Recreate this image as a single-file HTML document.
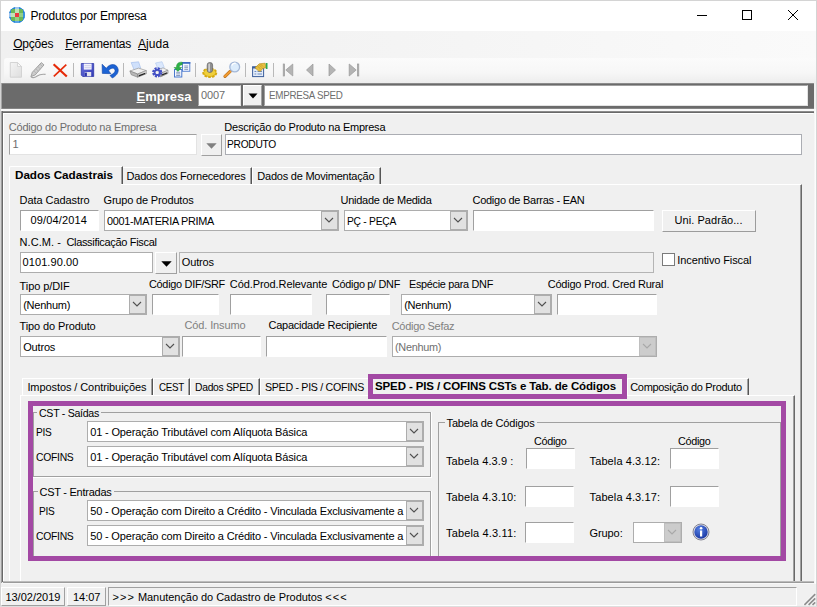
<!DOCTYPE html>
<html lang="pt-BR"><head><meta charset="utf-8"><title>Produtos por Empresa</title>
<style>
html,body{margin:0;padding:0;}
body{width:817px;height:607px;overflow:hidden;background:#f0f0f0;position:relative;font-family:"Liberation Sans", sans-serif;font-size:11px;color:#000;}
div,svg,span.t{position:absolute;box-sizing:border-box;}
span.t{white-space:pre;line-height:1;}
u{text-decoration:underline;text-underline-offset:1px;}
</style></head>
<body>
<div style="left:0px;top:0px;width:817px;height:31px;background:#fff;"></div>
<div style="left:0px;top:31px;width:817px;height:27px;background:linear-gradient(90deg,#f0f0f0 0%,#f3f3f3 40%,#fafafa 100%);"></div>
<div style="left:4px;top:58px;width:813px;height:26px;background:linear-gradient(180deg,#fbfbfb 0%,#f7f7f7 55%,#ececec 100%);border-top-left-radius:3px;"></div>
<div style="left:0px;top:0px;width:817px;height:1px;background:#d4d4d4;"></div>
<div style="left:0px;top:0px;width:1px;height:607px;background:#d4d4d4;"></div>
<div style="left:816px;top:0px;width:1px;height:607px;background:#d4d4d4;"></div>
<div style="left:0px;top:606px;width:817px;height:1px;background:#dedede;"></div>
<svg style="left:9px;top:7px" width="16" height="16" viewBox="0 0 16 16">
<defs><clipPath id="gc"><circle cx="8" cy="8" r="8"/></clipPath></defs>
<g clip-path="url(#gc)">
<rect x="0" y="0" width="16" height="16" fill="#2585d8"/>
<rect x="2" y="2" width="12" height="12" fill="#6cb857"/>
<rect x="6" y="0" width="4" height="2" fill="#a4c8f0"/><rect x="0" y="6" width="2" height="4" fill="#a4c8f0"/>
<rect x="6" y="14" width="4" height="2" fill="#5aa4e4"/><rect x="14" y="6" width="2" height="4" fill="#3a92dc"/>
<rect x="6" y="2" width="4" height="4" fill="#bfe3b6"/><rect x="2" y="6" width="4" height="4" fill="#bfe3b6"/>
<rect x="10" y="6" width="4" height="4" fill="#94cf84"/><rect x="6" y="10" width="4" height="4" fill="#94cf84"/>
<rect x="6" y="6" width="4" height="4" fill="#e83a40"/>
<path d="M0 0 h6 v1 h-2 v1 h-1 v1 h-1 v1 h-1 v2 h-1 z M16 0 h-6 v1 h2 v1 h1 v1 h1 v1 h1 v2 h1 z M0 16 h6 v-1 h-2 v-1 h-1 v-1 h-1 v-1 h-1 v-2 h-1 z M16 16 h-6 v-1 h2 v-1 h1 v-1 h1 v-1 h1 v-2 h1 z" fill="#2585d8"/>
</g>
</svg>
<span class="t" style="left:30.5px;top:10.0px;letter-spacing:-0.203px;font-size:12px;">Produtos por Empresa</span>
<svg style="left:690px;top:5px" width="120" height="22" viewBox="0 0 120 22"><g fill="none" stroke="#000" stroke-width="1"><path d="M7 10.5 H17"/><rect x="52.5" y="5.5" width="9" height="9"/><path d="M98 5 L108 15 M108 5 L98 15"/></g></svg>
<span class="t" style="left:13.2px;top:38.0px;letter-spacing:-0.229px;font-size:12px;"><u>O</u>pções</span>
<span class="t" style="left:65.2px;top:38.0px;letter-spacing:-0.186px;font-size:12px;"><u>F</u>erramentas</span>
<span class="t" style="left:138px;top:38.0px;letter-spacing:0.059px;font-size:12px;"><u>A</u>juda</span>
<svg style="left:0px;top:57px" width="380" height="27" viewBox="0 0 380 27">
<defs>
<linearGradient id="gsv" x1="0" y1="0" x2="1" y2="1"><stop offset="0" stop-color="#6f76e0"/><stop offset="1" stop-color="#2f38b4"/></linearGradient>
<linearGradient id="gpr" x1="0" y1="0" x2="0" y2="1"><stop offset="0" stop-color="#f4f4f4"/><stop offset="1" stop-color="#9c9c9c"/></linearGradient>
<linearGradient id="gdoc" x1="0" y1="0" x2="1" y2="1"><stop offset="0" stop-color="#f4f4f4"/><stop offset="1" stop-color="#dedede"/></linearGradient>
</defs>
<!-- new doc (disabled) -->
<path d="M10.300 5.500 h7.200 l4 4 v10.700 h-11.200 z" fill="url(#gdoc)" stroke="#d0d0d0" stroke-width=".9"/>
<path d="M17.500 5.500 v4 h4 z" fill="#f8f8f8" stroke="#d0d0d0" stroke-width=".8"/>
<!-- pencil (disabled) -->
<path d="M41.300 5.600 l2.700 2.300 l-8.800 10 l-4.200 1.600 l1.300 -4.200 z" fill="#cdcdcd" stroke="#9c9c9c" stroke-width=".9"/>
<path d="M40 7.200 l2.600 2.300 M34 14.200 l2.400 2.200 M36 12 l2.400 2.200 M38 9.700 l2.400 2.200" stroke="#a8a8a8" stroke-width=".6"/>
<path d="M30.800 19.300 c1.500 2 4.200 1.300 6.400 -0.300 c2.200 -1.600 5 -2 8.400 -1.600" fill="none" stroke="#a6a6a6" stroke-width="1.100"/>
<!-- red X -->
<path d="M53.600 7.300 L66.800 19.500" stroke="#e62a08" stroke-width="2.200" fill="none"/>
<path d="M66.300 7.600 L53.800 19.400" stroke="#e62a08" stroke-width="1.600" fill="none"/>
<!-- sep -->
<rect x="73" y="6" width="1" height="14" fill="#b9b9b9"/>
<!-- save -->
<path d="M81.300 6.500 h12.400 v13 h-11 l-1.400 -1.400 z" fill="url(#gsv)" stroke="#3038a8" stroke-width=".8"/>
<rect x="83.800" y="6.600" width="7.800" height="6" fill="#f4f4fc"/>
<path d="M84.500 8.700 h6.400 M84.500 10.700 h6.400" stroke="#c4c4e4" stroke-width=".8"/>
<rect x="84.700" y="15" width="6.500" height="4.300" fill="#e4e4ec"/>
<rect x="84.700" y="15.600" width="2.200" height="3.700" fill="#2c34a8"/>
<!-- undo -->
<path d="M102.100 7.200 L102.300 16.400 L110.900 16.700 L108.600 13.800 C110.300 10.800 114.200 10 115 13.100 C115.500 15 113.200 17.200 110 18.500 L112.300 21 C116 19.200 118.600 16 118.200 12.600 C117.500 7 110.500 5.300 106.300 11.300 Z" fill="#1c63d4" stroke="#1247a8" stroke-width=".6"/>
<!-- sep -->
<rect x="123" y="6" width="1" height="14" fill="#b9b9b9"/>
<!-- printer -->
<path d="M131.200 5.600 l7.400 -0.800 l2.100 6.400 l-6.500 1.900 z" fill="#cfe0fb" stroke="#9db9ea" stroke-width=".6"/>
<path d="M129.900 14 l8.700 -2.900 l7.700 2.500 l-8.700 3.400 z" fill="#f0f0f0" stroke="#8a8a8a" stroke-width=".6"/>
<path d="M129.900 14 l7.700 3 v3.200 l-6.400 -2.500 z" fill="#b8b8b8" stroke="#7c7c7c" stroke-width=".6"/>
<path d="M137.600 17 l8.700 -3.400 v3.200 l-8.700 3.400 z" fill="url(#gpr)" stroke="#7c7c7c" stroke-width=".6"/>
<path d="M138.800 18.200 l6.400 -2.500 v1.300 l-6.400 2.600 z" fill="#1c1c1c"/>
<!-- printer w/ gear -->
<path d="M155.500 6 l6.500 -1.300 l2.300 5.800 l-6 2 z" fill="#dbe8fc" stroke="#afc6ee" stroke-width=".6"/>
<path d="M155.500 13.500 l7.500 -2.600 l5 2.300 l-7.500 3.200 z" fill="#f2f2f2" stroke="#909090" stroke-width=".6"/>
<path d="M160.500 16.400 l7.500 -3.200 v3.200 l-7.500 3.500 z" fill="url(#gpr)" stroke="#808080" stroke-width=".6"/>
<path d="M161.500 17.600 l5.600 -2.300 v1.100 l-5.600 2.400 z" fill="#222"/>
<circle cx="157.200" cy="15.400" r="3.700" fill="none" stroke="#4450c4" stroke-width="2.800" stroke-dasharray="1.940 0.970"/>
<circle cx="157.200" cy="15.400" r="2.600" fill="none" stroke="#4450c4" stroke-width="1.800"/>
<circle cx="157.200" cy="15.400" r="1.200" fill="#f4f4f4"/>
<!-- copy doc w/ green arrow -->
<rect x="182.500" y="5.500" width="7.300" height="8.800" fill="#f4f8ff" stroke="#5f88d4" stroke-width="1"/>
<rect x="182" y="5" width="8.300" height="1.800" fill="#3e6cc4"/>
<path d="M184.300 9 h3.800 M184.300 10.700 h3.800 M184.300 12.400 h3.800" stroke="#6e84ac" stroke-width=".8"/>
<rect x="174.500" y="12.500" width="7.300" height="7.500" fill="#f4f8ff" stroke="#4a78cc" stroke-width="1"/>
<path d="M176.200 15.300 h4 M176.200 16.900 h4 M176.200 18.500 h4" stroke="#6e84ac" stroke-width=".8"/>
<path d="M182.200 5.200 c-4 -0.300 -5.800 1.600 -5.800 5.300 h-2.300 l3.800 3.900 l3.800 -3.900 h-2.400 c0 -1.800 0.800 -2.700 2.900 -2.700 z" fill="#2eb146" stroke="#1c8c32" stroke-width=".5"/>
<!-- sep -->
<rect x="195" y="6" width="1" height="14" fill="#b9b9b9"/>
<!-- gold stamp/gear -->
<ellipse cx="209.800" cy="15.800" rx="6.600" ry="4.300" fill="#e2b818" stroke="#d4a810" stroke-width="1.800" stroke-dasharray="2.600 1.200"/>
<ellipse cx="209.800" cy="15.600" rx="5.600" ry="3.500" fill="#efcf3c"/>
<rect x="207.200" y="5.600" width="5.400" height="9.800" rx="2.400" fill="#909090" stroke="#606060" stroke-width=".7"/>
<rect x="208.400" y="6.600" width="1.500" height="8" fill="#d4d4d4"/>
<!-- magnifier -->
<path d="M225 19.300 l5.200 -4.900" stroke="#b87020" stroke-width="3.200" stroke-linecap="round"/>
<path d="M225 19.300 l5.200 -4.900" stroke="#f09a30" stroke-width="2" stroke-linecap="round"/>
<circle cx="234.700" cy="10" r="4.900" fill="#dcecfc" stroke="#a4b8d8" stroke-width="1.300"/>
<path d="M231.800 8.500 a3.500 3.500 0 0 1 4 -2.200" stroke="#fff" stroke-width="1.300" fill="none"/>
<!-- sep -->
<rect x="245" y="6" width="1" height="14" fill="#b9b9b9"/>
<!-- properties -->
<rect x="252.600" y="9.900" width="11" height="9.700" fill="#e4ecf8" stroke="#3c5f9c" stroke-width="1"/>
<rect x="252.200" y="9.500" width="11.800" height="2" fill="#3c5f9c"/>
<path d="M254.500 14.500 h1.800 M257.500 14.500 h4.500 M254.500 17 h1.800 M257.500 17 h4.500" stroke="#6a8cc4" stroke-width="1"/>
<path d="M255 10.800 l4.300 -4 l5.800 -0.600 l0.900 4.300 l-3.600 1.200 l-1.800 2.600 l-2 -0.300 z" fill="#e8c040" stroke="#b08818" stroke-width=".6"/>
<path d="M257.500 9 l3 3 M259 7.700 l3 3 M260.500 7 l2.500 2.500" stroke="#b08818" stroke-width=".5"/>
<path d="M265.800 6 h1.700 v6 h-1.700 z" fill="#2faa4c"/>
<!-- sep -->
<rect x="273" y="6" width="1" height="14" fill="#b9b9b9"/>
<!-- nav -->
<g fill="#b4b4b4" stroke="#9a9a9a" stroke-width=".7">
<rect x="283.200" y="7" width="1.400" height="12"/><path d="M292.800 7 v12 l-7 -6 z"/>
<path d="M313 7 v12 l-6.500 -6 z"/>
<path d="M329 7 v12 l6.500 -6 z"/>
<path d="M349.200 7 v12 l7 -6 z"/><rect x="357.400" y="7" width="1.400" height="12"/>
</g>
</svg>
<div style="left:1px;top:83px;width:813px;height:26px;background:#a4a4a4;"></div>
<div style="left:2px;top:83px;width:812px;height:1px;background:#8c8c8c;"></div>
<div style="left:2px;top:84px;width:812px;height:24px;background:#6b6b6b;"></div>
<div style="left:2px;top:108px;width:812px;height:1px;background:#858585;"></div>
<div style="left:1px;top:109px;width:815px;height:2px;background:#f9f9f9;"></div>
<span class="t" style="left:136.5px;top:90.0px;letter-spacing:0.011px;font-size:13px;font-weight:bold;color:#fff;"><u>E</u>mpresa</span>
<div style="left:198px;top:85px;width:43px;height:21px;background:#fff;border:1px solid;border-color:#a0a0a0 #e3e3e3 #e3e3e3 #a0a0a0;"></div>
<span class="t" style="left:201px;top:89.5px;letter-spacing:-0.121px;color:#6d6d6d;">0007</span>
<div style="left:243px;top:85px;width:19px;height:21px;background:#f0f0f0;border:1px solid;border-color:#fff #a0a0a0 #a0a0a0 #fff;"></div>
<svg style="left:247.5px;top:92.8px" width="10" height="6" viewBox="0 0 10 6"><path d="M0.500 0.500 L9.500 0.500 L5 5.500 Z" fill="#000"/></svg>
<div style="left:264px;top:85px;width:544px;height:21px;background:#fff;border:1px solid;border-color:#a0a0a0 #e3e3e3 #e3e3e3 #a0a0a0;"></div>
<span class="t" style="left:269.3px;top:89.5px;letter-spacing:-0.3px;color:#6d6d6d;transform:scaleX(0.8897);transform-origin:0 50%;">EMPRESA SPED</span>
<div style="left:1px;top:111px;width:813px;height:1px;background:#8c8c8c;"></div>
<div style="left:2px;top:112px;width:812px;height:1px;background:#696969;"></div>
<div style="left:1px;top:111px;width:1px;height:472px;background:#a0a0a0;"></div>
<div style="left:2px;top:111px;width:1px;height:471px;background:#696969;"></div>
<div style="left:3px;top:113px;width:810px;height:1px;background:#fff;"></div>
<div style="left:3px;top:113px;width:1px;height:468px;background:#fff;"></div>
<div style="left:814px;top:111px;width:2px;height:473px;background:linear-gradient(90deg,#f4f4f4,#fff);"></div>
<span class="t" style="left:8.8px;top:122.0px;letter-spacing:-0.236px;color:#6d6d6d;">Código do Produto na Empresa</span>
<div style="left:9px;top:134px;width:188px;height:21px;background:#fff;border:1px solid;border-color:#a0a0a0 #e3e3e3 #e3e3e3 #a0a0a0;"></div>
<span class="t" style="left:12.5px;top:138.7px;letter-spacing:-0.2px;color:#6d6d6d;">1</span>
<div style="left:201px;top:134px;width:21px;height:22px;background:#f0f0f0;border:1px solid;border-color:#fff #a0a0a0 #a0a0a0 #fff;"></div>
<svg style="left:206.0px;top:142.5px" width="11" height="6" viewBox="0 0 11 6"><path d="M0.3 0.3 L10.7 0.3 L5.5 5.7 Z" fill="#808080"/></svg>
<span class="t" style="left:224.3px;top:122.0px;letter-spacing:-0.231px;">Descrição do Produto na Empresa</span>
<div style="left:225px;top:134px;width:577px;height:21px;background:#fff;border:1px solid #abadb3;"></div>
<span class="t" style="left:227.2px;top:138.7px;letter-spacing:-0.3px;transform:scaleX(0.9297);transform-origin:0 50%;">PRODUTO</span>
<div style="left:9px;top:184px;width:793px;height:397px;background:#f0f0f0;border:1px solid;border-color:#fff #696969 #696969 #fff;border-bottom:0;box-shadow:inset -1px 0 0 #a0a0a0;"></div>
<div style="left:9px;top:166px;width:114px;height:18px;background:#f0f0f0;border:1px solid;border-color:#fff #555 #f0f0f0 #fff;border-bottom:0;box-shadow:inset -1px 0 0 #a0a0a0;border-top-left-radius:2px;"></div>
<div style="left:10px;top:184px;width:111px;height:1px;background:#f0f0f0;"></div>
<span class="t" style="left:15px;top:168.95px;letter-spacing:-0.046px;font-size:11.7px;font-weight:bold;">Dados Cadastrais</span>
<div style="left:123px;top:167px;width:129px;height:17px;border-right:1px solid #555;border-top:1px solid #fff;box-shadow:inset -1px 0 0 #a0a0a0;"></div>
<span class="t" style="left:126.5px;top:171.0px;letter-spacing:-0.205px;">Dados dos Fornecedores</span>
<div style="left:252px;top:167px;width:129px;height:17px;border-left:1px solid #fff;border-right:1px solid #555;border-top:1px solid #fff;box-shadow:inset -1px 0 0 #a0a0a0;"></div>
<span class="t" style="left:257.3px;top:171.0px;letter-spacing:-0.223px;">Dados de Movimentação</span>
<span class="t" style="left:19.6px;top:195.0px;letter-spacing:-0.072px;">Data Cadastro</span>
<div style="left:20px;top:210px;width:79px;height:21px;background:#fff;border:1px solid;border-color:#a0a0a0 #fff #fff #a0a0a0;"></div>
<span class="t" style="left:30.6px;top:214.7px;letter-spacing:0.144px;">09/04/2014</span>
<span class="t" style="left:103.5px;top:195.0px;letter-spacing:-0.174px;">Grupo de Produtos</span>
<div style="left:104px;top:210px;width:235px;height:21px;background:#fff;border:1px solid #adadad;"></div>
<div style="left:321px;top:211px;width:17px;height:19px;background:#e1e1e1;border:1px solid #adadad;"></div>
<svg style="left:323.5px;top:217.3px" width="10" height="6" viewBox="0 0 10 6"><path d="M1 1 L5 5 L9 1" fill="none" stroke="#505050" stroke-width="1.1"/></svg>
<span class="t" style="left:107.2px;top:216.0px;letter-spacing:-0.3px;transform:scaleX(0.9897);transform-origin:0 50%;">0001-MATERIA PRIMA</span>
<span class="t" style="left:340.5px;top:195.0px;letter-spacing:-0.259px;">Unidade de Medida</span>
<div style="left:344px;top:210px;width:124px;height:21px;background:#fff;border:1px solid #adadad;"></div>
<div style="left:450px;top:211px;width:17px;height:19px;background:#e1e1e1;border:1px solid #adadad;"></div>
<svg style="left:452.5px;top:217.3px" width="10" height="6" viewBox="0 0 10 6"><path d="M1 1 L5 5 L9 1" fill="none" stroke="#505050" stroke-width="1.1"/></svg>
<span class="t" style="left:347.2px;top:216.0px;letter-spacing:-0.3px;transform:scaleX(0.9367);transform-origin:0 50%;">PÇ - PEÇA</span>
<span class="t" style="left:472.5px;top:195.0px;letter-spacing:-0.273px;">Codigo de Barras - EAN</span>
<div style="left:473px;top:210px;width:181px;height:21px;background:#fff;border:1px solid;border-color:#a0a0a0 #fff #fff #a0a0a0;"></div>
<div style="left:662px;top:210px;width:94px;height:22px;background:#f0f0f0;border:1px solid;border-color:#fff #9c9c9c #9c9c9c #fff;"></div>
<span class="t" style="left:674.6px;top:215.3px;letter-spacing:0.052px;">Uni. Padrão...</span>
<span class="t" style="left:19.6px;top:236.8px;letter-spacing:0.043px;">N.C.M. -</span>
<span class="t" style="left:66.4px;top:236.8px;letter-spacing:-0.32px;">Classificação Fiscal</span>
<div style="left:20px;top:252px;width:133px;height:21px;background:#fff;border:1px solid #adadad;"></div>
<span class="t" style="left:22.5px;top:256.7px;letter-spacing:0.094px;">0101.90.00</span>
<div style="left:155px;top:252px;width:22px;height:22px;background:#f0f0f0;border:1px solid;border-color:#fff #a0a0a0 #a0a0a0 #fff;"></div>
<svg style="left:160.5px;top:260.5px" width="11" height="6" viewBox="0 0 11 6"><path d="M0.3 0.3 L10.7 0.3 L5.5 5.7 Z" fill="#000"/></svg>
<div style="left:179px;top:252px;width:475px;height:21px;background:#f0f0f0;border:1px solid #b4b4b4;"></div>
<span class="t" style="left:181.8px;top:256.9px;letter-spacing:-0.169px;">Outros</span>
<div style="left:662px;top:253px;width:13px;height:13px;background:#fff;border:1px solid #7a7a7a;"></div>
<span class="t" style="left:677.3px;top:254.7px;letter-spacing:-0.113px;">Incentivo Fiscal</span>
<span class="t" style="left:19.6px;top:281.0px;letter-spacing:-0.095px;">Tipo p/DIF</span>
<div style="left:20px;top:294px;width:127px;height:21px;background:#fff;border:1px solid #adadad;"></div>
<div style="left:129px;top:295px;width:17px;height:19px;background:#e1e1e1;border:1px solid #adadad;"></div>
<svg style="left:131.5px;top:301.3px" width="10" height="6" viewBox="0 0 10 6"><path d="M1 1 L5 5 L9 1" fill="none" stroke="#505050" stroke-width="1.1"/></svg>
<span class="t" style="left:23.2px;top:300.0px;letter-spacing:-0.238px;">(Nenhum)</span>
<span class="t" style="left:148.6px;top:279.0px;letter-spacing:-0.3px;transform:scaleX(0.9935);transform-origin:0 50%;">Código DIF/SRF</span>
<div style="left:152px;top:294px;width:67px;height:21px;background:#fff;border:1px solid;border-color:#a0a0a0 #fff #fff #a0a0a0;"></div>
<span class="t" style="left:229.8px;top:279.0px;letter-spacing:-0.087px;">Cód.Prod.Relevante</span>
<div style="left:230px;top:294px;width:82px;height:21px;background:#fff;border:1px solid;border-color:#a0a0a0 #fff #fff #a0a0a0;"></div>
<span class="t" style="left:331.8px;top:279.0px;letter-spacing:-0.3px;transform:scaleX(0.9875);transform-origin:0 50%;">Código p/ DNF</span>
<div style="left:326px;top:294px;width:64px;height:21px;background:#fff;border:1px solid;border-color:#a0a0a0 #fff #fff #a0a0a0;"></div>
<span class="t" style="left:409.4px;top:279.0px;letter-spacing:-0.3px;transform:scaleX(0.9873);transform-origin:0 50%;">Espécie para DNF</span>
<div style="left:401px;top:294px;width:151px;height:21px;background:#fff;border:1px solid #adadad;"></div>
<div style="left:534px;top:295px;width:17px;height:19px;background:#e1e1e1;border:1px solid #adadad;"></div>
<svg style="left:536.5px;top:301.3px" width="10" height="6" viewBox="0 0 10 6"><path d="M1 1 L5 5 L9 1" fill="none" stroke="#505050" stroke-width="1.1"/></svg>
<span class="t" style="left:404.2px;top:300.0px;letter-spacing:-0.238px;">(Nenhum)</span>
<span class="t" style="left:547.7px;top:279.0px;letter-spacing:-0.215px;">Código Prod. Cred Rural</span>
<div style="left:557px;top:294px;width:100px;height:21px;background:#fff;border:1px solid;border-color:#a0a0a0 #fff #fff #a0a0a0;"></div>
<span class="t" style="left:19.6px;top:320.8px;letter-spacing:-0.125px;">Tipo do Produto</span>
<div style="left:20px;top:336px;width:160px;height:21px;background:#fff;border:1px solid #adadad;"></div>
<div style="left:162px;top:337px;width:17px;height:19px;background:#e1e1e1;border:1px solid #adadad;"></div>
<svg style="left:164.5px;top:343.3px" width="10" height="6" viewBox="0 0 10 6"><path d="M1 1 L5 5 L9 1" fill="none" stroke="#505050" stroke-width="1.1"/></svg>
<span class="t" style="left:23.2px;top:342.0px;letter-spacing:-0.169px;">Outros</span>
<span class="t" style="left:184.5px;top:320.3px;letter-spacing:-0.125px;color:#808080;">Cód. Insumo</span>
<div style="left:182px;top:336px;width:79px;height:21px;background:#fff;border:1px solid;border-color:#a0a0a0 #fff #fff #a0a0a0;"></div>
<span class="t" style="left:268.5px;top:320.3px;letter-spacing:-0.25px;">Capacidade Recipiente</span>
<div style="left:266px;top:336px;width:121px;height:21px;background:#fff;border:1px solid;border-color:#a0a0a0 #fff #fff #a0a0a0;"></div>
<span class="t" style="left:391.7px;top:320.8px;letter-spacing:-0.296px;color:#808080;">Código Sefaz</span>
<div style="left:392px;top:336px;width:265px;height:21px;background:#fff;border:1px solid #adadad;"></div>
<div style="left:639px;top:337px;width:17px;height:19px;background:#cccccc;border:1px solid #bfbfbf;"></div>
<svg style="left:641.5px;top:343.3px" width="10" height="6" viewBox="0 0 10 6"><path d="M1 1 L5 5 L9 1" fill="none" stroke="#a8a8a8" stroke-width="1.1"/></svg>
<span class="t" style="left:395.2px;top:342.0px;letter-spacing:-0.3px;color:#707070;transform:scaleX(0.9889);transform-origin:0 50%;">(Nenhum)</span>
<div style="left:20px;top:395px;width:775px;height:186px;background:#f0f0f0;border:1px solid;border-color:#fff #696969 #696969 #fff;border-bottom:0;box-shadow:inset -1px 0 0 #a0a0a0;"></div>
<div style="left:22px;top:378px;width:131px;height:17px;border-left:1px solid #fff;border-right:1px solid #555;border-top:1px solid #fff;box-shadow:inset -1px 0 0 #a0a0a0;"></div>
<span class="t" style="left:27.4px;top:382.0px;letter-spacing:-0.086px;">Impostos / Contribuições</span>
<div style="left:153px;top:378px;width:37px;height:17px;border-left:1px solid #fff;border-right:1px solid #555;border-top:1px solid #fff;box-shadow:inset -1px 0 0 #a0a0a0;"></div>
<span class="t" style="left:158.6px;top:382.0px;letter-spacing:-0.3px;transform:scaleX(0.8884);transform-origin:0 50%;">CEST</span>
<div style="left:190px;top:378px;width:70px;height:17px;border-left:1px solid #fff;border-right:1px solid #555;border-top:1px solid #fff;box-shadow:inset -1px 0 0 #a0a0a0;"></div>
<span class="t" style="left:195.2px;top:382.0px;letter-spacing:-0.3px;transform:scaleX(0.9383);transform-origin:0 50%;">Dados SPED</span>
<div style="left:260px;top:378px;width:108px;height:17px;border-left:1px solid #fff;border-top:1px solid #fff;"></div>
<span class="t" style="left:265.2px;top:382.0px;letter-spacing:-0.3px;transform:scaleX(0.9659);transform-origin:0 50%;">SPED - PIS / COFINS</span>
<div style="left:368px;top:377px;width:259px;height:20px;background:#f0f0f0;border:1px solid;border-color:#fff #696969 #f0f0f0 #fff;border-bottom:0;"></div>
<span class="t" style="left:375px;top:380.75px;letter-spacing:-0.124px;font-size:11.5px;font-weight:bold;">SPED - PIS / COFINS CSTs e Tab. de Códigos</span>
<div style="left:627px;top:378px;width:122px;height:17px;border-left:1px solid #fff;border-right:1px solid #555;border-top:1px solid #fff;box-shadow:inset -1px 0 0 #a0a0a0;"></div>
<span class="t" style="left:630.2px;top:382.0px;letter-spacing:-0.31px;">Composição do Produto</span>
<div style="left:33px;top:412px;width:399px;height:66px;border:1px solid #fff;"></div>
<div style="left:33px;top:412px;width:398px;height:65px;border:1px solid #a0a0a0;"></div>
<div style="left:37.2px;top:406px;width:64px;height:13px;background:#f0f0f0;"></div>
<span class="t" style="left:39.2px;top:407.5px;letter-spacing:-0.3px;transform:scaleX(0.9641);transform-origin:0 50%;">CST - Saídas</span>
<span class="t" style="left:36.2px;top:427.2px;letter-spacing:-0.3px;transform:scaleX(0.9202);transform-origin:0 50%;">PIS</span>
<div style="left:87px;top:421px;width:337px;height:21px;background:#fff;border:1px solid #adadad;"></div>
<div style="left:406px;top:422px;width:17px;height:19px;background:#e1e1e1;border:1px solid #adadad;"></div>
<svg style="left:408.5px;top:428.3px" width="10" height="6" viewBox="0 0 10 6"><path d="M1 1 L5 5 L9 1" fill="none" stroke="#505050" stroke-width="1.1"/></svg>
<span class="t" style="left:90.2px;top:427.0px;letter-spacing:-0.154px;">01 - Operação Tributável com Alíquota Básica</span>
<span class="t" style="left:36.2px;top:452.2px;letter-spacing:-0.3px;transform:scaleX(0.943);transform-origin:0 50%;">COFINS</span>
<div style="left:87px;top:446px;width:337px;height:21px;background:#fff;border:1px solid #adadad;"></div>
<div style="left:406px;top:447px;width:17px;height:19px;background:#e1e1e1;border:1px solid #adadad;"></div>
<svg style="left:408.5px;top:453.3px" width="10" height="6" viewBox="0 0 10 6"><path d="M1 1 L5 5 L9 1" fill="none" stroke="#505050" stroke-width="1.1"/></svg>
<span class="t" style="left:90.2px;top:452.0px;letter-spacing:-0.154px;">01 - Operação Tributável com Alíquota Básica</span>
<div style="left:33px;top:491px;width:399px;height:67px;border:1px solid #fff;"></div>
<div style="left:33px;top:491px;width:398px;height:66px;border:1px solid #a0a0a0;"></div>
<div style="left:37.5px;top:485px;width:76px;height:13px;background:#f0f0f0;"></div>
<span class="t" style="left:39.5px;top:486.5px;letter-spacing:-0.258px;">CST - Entradas</span>
<span class="t" style="left:39.2px;top:506.0px;letter-spacing:-0.3px;transform:scaleX(0.9202);transform-origin:0 50%;">PIS</span>
<div style="left:87px;top:500px;width:337px;height:21px;background:#fff;border:1px solid #adadad;"></div>
<div style="left:406px;top:501px;width:17px;height:19px;background:#e1e1e1;border:1px solid #adadad;"></div>
<svg style="left:408.5px;top:507.3px" width="10" height="6" viewBox="0 0 10 6"><path d="M1 1 L5 5 L9 1" fill="none" stroke="#505050" stroke-width="1.1"/></svg>
<span class="t" style="left:90.2px;top:506.0px;letter-spacing:-0.169px;">50 - Operação com Direito a Crédito - Vinculada Exclusivamente a</span>
<span class="t" style="left:36.2px;top:531.0px;letter-spacing:-0.3px;transform:scaleX(0.943);transform-origin:0 50%;">COFINS</span>
<div style="left:87px;top:525px;width:337px;height:21px;background:#fff;border:1px solid #adadad;"></div>
<div style="left:406px;top:526px;width:17px;height:19px;background:#e1e1e1;border:1px solid #adadad;"></div>
<svg style="left:408.5px;top:532.3px" width="10" height="6" viewBox="0 0 10 6"><path d="M1 1 L5 5 L9 1" fill="none" stroke="#505050" stroke-width="1.1"/></svg>
<span class="t" style="left:90.2px;top:531.0px;letter-spacing:-0.169px;">50 - Operação com Direito a Crédito - Vinculada Exclusivamente a</span>
<div style="left:438px;top:422px;width:344px;height:136px;border:1px solid #fff;"></div>
<div style="left:438px;top:422px;width:343px;height:135px;border:1px solid #a0a0a0;"></div>
<div style="left:444.6px;top:416px;width:92px;height:13px;background:#f0f0f0;"></div>
<span class="t" style="left:446.6px;top:417.5px;letter-spacing:-0.184px;">Tabela de Códigos</span>
<span class="t" style="left:533.5px;top:436.0px;letter-spacing:-0.3px;transform:scaleX(0.983);transform-origin:0 50%;">Código</span>
<span class="t" style="left:678px;top:436.0px;letter-spacing:-0.3px;transform:scaleX(0.983);transform-origin:0 50%;">Código</span>
<span class="t" style="left:446px;top:456.0px;letter-spacing:0.103px;">Tabela 4.3.9 :</span>
<div style="left:526px;top:448px;width:49px;height:21px;background:#fff;border:1px solid;border-color:#a0a0a0 #fff #fff #a0a0a0;"></div>
<span class="t" style="left:589.6px;top:456.0px;letter-spacing:0.098px;">Tabela 4.3.12:</span>
<div style="left:670px;top:448px;width:49px;height:21px;background:#fff;border:1px solid;border-color:#a0a0a0 #fff #fff #a0a0a0;"></div>
<span class="t" style="left:446px;top:491.6px;letter-spacing:0.098px;">Tabela 4.3.10:</span>
<div style="left:525px;top:486px;width:49px;height:21px;background:#fff;border:1px solid;border-color:#a0a0a0 #fff #fff #a0a0a0;"></div>
<span class="t" style="left:589.6px;top:491.6px;letter-spacing:0.098px;">Tabela 4.3.17:</span>
<div style="left:670px;top:486px;width:49px;height:21px;background:#fff;border:1px solid;border-color:#a0a0a0 #fff #fff #a0a0a0;"></div>
<span class="t" style="left:446px;top:527.5px;letter-spacing:0.157px;">Tabela 4.3.11:</span>
<div style="left:525px;top:522px;width:49px;height:21px;background:#fff;border:1px solid;border-color:#a0a0a0 #fff #fff #a0a0a0;"></div>
<span class="t" style="left:589.6px;top:527.5px;letter-spacing:-0.107px;">Grupo:</span>
<div style="left:633px;top:522px;width:49px;height:21px;background:#fff;border:1px solid #adadad;"></div>
<div style="left:664px;top:523px;width:17px;height:19px;background:#cccccc;border:1px solid #bfbfbf;"></div>
<svg style="left:666.5px;top:529.3px" width="10" height="6" viewBox="0 0 10 6"><path d="M1 1 L5 5 L9 1" fill="none" stroke="#a8a8a8" stroke-width="1.1"/></svg>
<svg style="left:692px;top:523px" width="18" height="18" viewBox="0 0 18 18">
<defs><radialGradient id="ig" cx=".4" cy=".3" r=".8"><stop offset="0" stop-color="#5580e4"/><stop offset="1" stop-color="#14309c"/></radialGradient></defs>
<circle cx="9" cy="9" r="8" fill="#dcdce4" stroke="#787888" stroke-width=".9"/>
<circle cx="9" cy="9" r="6.700" fill="url(#ig)"/>
<rect x="8" y="7.500" width="2.200" height="6" fill="#fff"/><circle cx="9.100" cy="5.300" r="1.300" fill="#fff"/>
</svg>
<div style="left:3px;top:581px;width:811px;height:1px;background:#bcbcbc;"></div>
<div style="left:3px;top:582px;width:811px;height:1px;background:#9a9a9a;"></div>
<div style="left:2px;top:583px;width:813px;height:1px;background:#f8f8f8;"></div>
<div style="left:368px;top:374px;width:259px;height:24.5px;border:5px solid #a349a4;"></div>
<div style="left:28px;top:401px;width:758px;height:160px;border:5px solid #a349a4;"></div>
<div style="left:1px;top:587px;width:64px;height:19px;border:1px solid;border-color:#fff #a0a0a0 #a0a0a0 #fff;"></div>
<span class="t" style="left:5.4px;top:592.0px;letter-spacing:-0.006px;">13/02/2019</span>
<div style="left:67px;top:587px;width:39px;height:19px;border:1px solid;border-color:#fff #a0a0a0 #a0a0a0 #fff;"></div>
<span class="t" style="left:73px;top:592.0px;letter-spacing:-0.046px;">14:07</span>
<div style="left:108px;top:587px;width:689px;height:19px;border:1px solid;border-color:#a0a0a0 #fff #fff #a0a0a0;"></div>
<span class="t" style="left:112.6px;top:592.0px;letter-spacing:-0.043px;"><span style="letter-spacing:1px">&gt;&gt;&gt;</span> Manutenção do Cadastro de Produtos <span style="letter-spacing:1px">&lt;&lt;&lt;</span></span>
<svg style="left:802px;top:592px" width="14" height="14" viewBox="0 0 14 14"><g stroke="#fafafa" stroke-width="1.2"><path d="M1.2 12.600 L13 1 M5.400 12.600 L13 5.200 M9.300 12.600 L13 9.200"/></g><g stroke="#8e8e8e" stroke-width="1.700"><path d="M2.400 12.800 L13.200 2.200 M6.600 12.800 L13.200 6.400 M10.500 12.800 L13.200 10.400"/></g></svg>
</body></html>
